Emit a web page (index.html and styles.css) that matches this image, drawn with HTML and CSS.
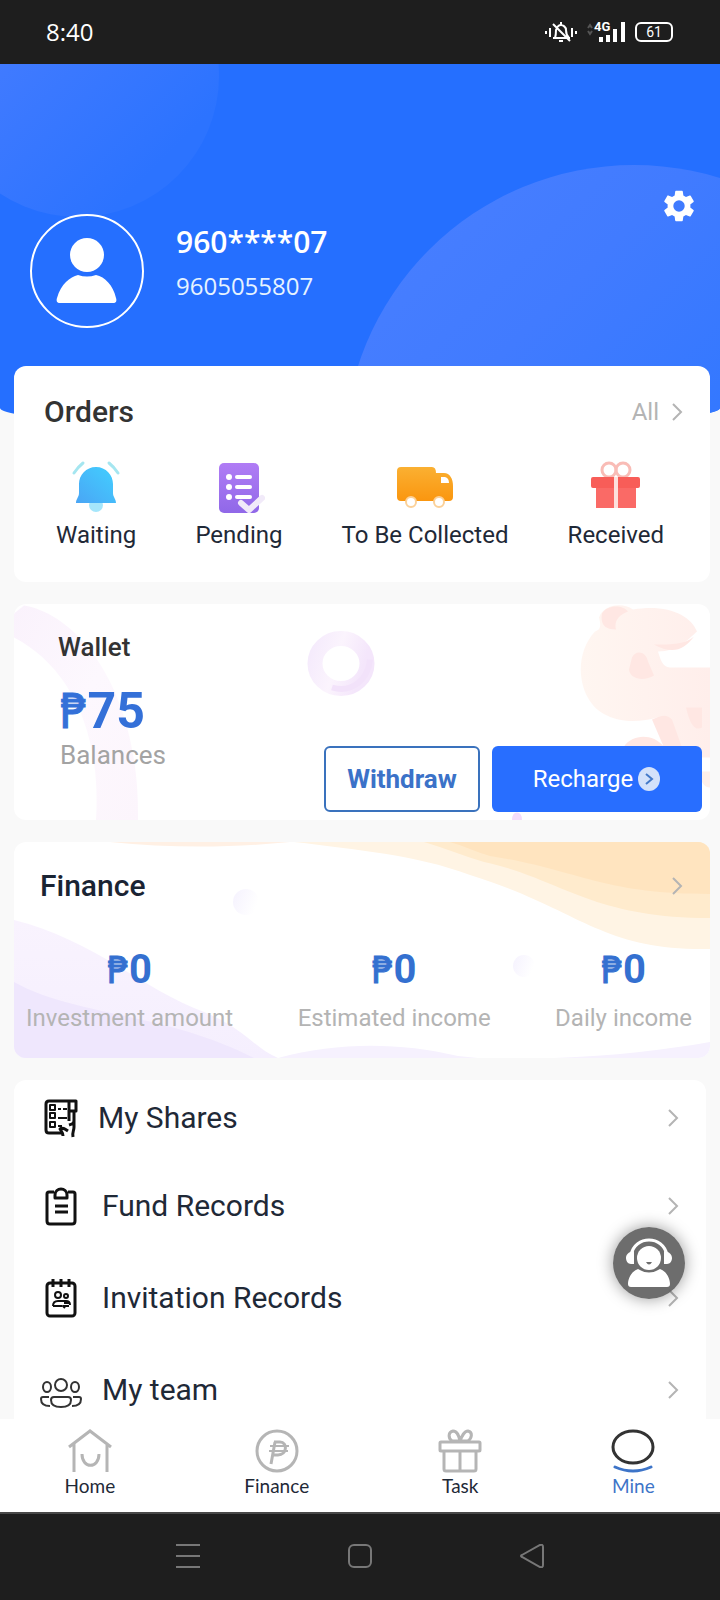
FILE: index.html
```html
<!DOCTYPE html>
<html lang="en">
<head>
<meta charset="utf-8">
<meta name="viewport" content="width=device-width, initial-scale=1">
<title>Mine</title>
<link rel="stylesheet" href="styles.css">
</head>
<body>
<div class="app">
  <div class="status">
    <span class="clock">8:40</span>
    <div class="status-icons">
      <svg width="32" height="24" viewBox="0 0 32 24" fill="none" stroke="#fff" stroke-width="2">
        <path d="M1 11v3M5 8v9M27 8v9M31 11v3"/>
        <path d="M8 18h17M10 18c1-3 1-5 1-8 1-3 3-5 5-5s5 2 5 5c0 3 1 6 3 8M16 2v3M14 21h4M8 4l17 17"/>
      </svg>
      <span class="net">
        <svg width="38" height="24" viewBox="0 0 38 24">
          <path d="M1 8l2-3 2 3M1 11l2 3 2-3" fill="none" stroke="#555" stroke-width="2"/>
          <path d="M12 17h4v5h-4zM19 15h4v7h-4zM26 9h4v13h-4zM34 2h4v20h-4z" fill="#fff"/>
        </svg>
        <span class="net-label">4G</span>
      </span>
      <span class="battery">61</span>
    </div>
  </div>

  <header class="hero">
    <svg class="hero-art" viewBox="0 0 720 364" preserveAspectRatio="xMidYMin slice">
      <defs>
        <linearGradient id="ga" x1="0" y1="0" x2="1" y2="1"><stop offset="0.3" stop-color="#427bff"/><stop offset="0.8" stop-color="#2c73ff"/></linearGradient>
        <linearGradient id="gb" x1="0.1" y1="0.1" x2="0.6" y2="0.6"><stop offset="0" stop-color="#477eff"/><stop offset="0.4" stop-color="#417bff"/><stop offset="1" stop-color="#3077ff"/></linearGradient>
      </defs>
      <circle cx="78" cy="12" r="141" fill="url(#ga)"/>
      <circle cx="634" cy="391" r="290" fill="url(#gb)"/>
    </svg>
    <div class="avatar">
      <svg width="62" height="66" viewBox="0 0 62 66" fill="#fff">
        <circle cx="31" cy="17" r="17"/>
        <path d="M4 65c-3 0-4-2-3-5C5 46 14 39 22 37c6 2 12 2 18 0 9 2 17 10 20 23 1 3 0 5-3 5z"/>
      </svg>
    </div>
    <div class="who">
      <h1 class="name">960****07</h1>
      <p class="phone">9605055807</p>
    </div>
    <button class="gear" aria-label="Settings">
      <svg width="38" height="38" viewBox="0 0 24 24" fill="#fff"><path d="M19.14 12.94c.04-.3.06-.61.06-.94s-.02-.64-.07-.94l2.03-1.58a.49.49 0 0 0 .12-.61l-1.92-3.32a.49.49 0 0 0-.59-.22l-2.39.96a7 7 0 0 0-1.62-.94l-.36-2.54a.48.48 0 0 0-.48-.41h-3.84a.48.48 0 0 0-.47.41l-.36 2.54c-.59.24-1.13.57-1.62.94l-2.39-.96a.48.48 0 0 0-.59.22L2.74 8.87a.48.48 0 0 0 .12.61l2.03 1.58c-.05.3-.09.63-.09.94s.02.64.07.94l-2.03 1.58a.49.49 0 0 0-.12.61l1.92 3.32c.12.22.37.29.59.22l2.39-.96c.5.38 1.03.7 1.62.94l.36 2.54c.05.24.24.41.48.41h3.84c.24 0 .44-.17.47-.41l.36-2.54c.59-.24 1.13-.56 1.62-.94l2.39.96c.22.08.47 0 .59-.22l1.92-3.32a.48.48 0 0 0-.12-.61zM12 15.6a3.6 3.6 0 1 1 0-7.2 3.6 3.6 0 0 1 0 7.2z"/></svg>
    </button>
  </header>

  <main class="content">
    <section class="card orders">
      <div class="card-head">
        <h2 class="title ink">Orders</h2>
        <a class="all" href="#">All <svg class="chev" width="12" height="20" viewBox="0 0 12 20"><path d="M2 2l8 8-8 8"/></svg></a>
      </div>
      <div class="order-list">
        <a class="order" href="#">
          <svg width="52" height="56" viewBox="0 0 52 56">
            <defs><linearGradient id="bell" x1="1" y1="0" x2="0" y2="1"><stop offset="0" stop-color="#42d0ff"/><stop offset="1" stop-color="#4aa5f5"/></linearGradient></defs>
            <circle cx="26" cy="47" r="7" fill="#a5e6fb"/>
            <path d="M26 9c10 0 17 8 17 17v9c0 4 3 6 3 10H6c0-4 3-6 3-10v-9C9 17 16 9 26 9z" fill="url(#bell)"/>
            <path d="M4 15q4-6 9-10M48 15Q44 9 39 5" fill="none" stroke="#a5e6f0" stroke-width="3" stroke-linecap="round"/>
          </svg>
          Waiting
        </a>
        <a class="order" href="#">
          <svg width="52" height="56" viewBox="0 0 52 56">
            <defs><linearGradient id="doc" x1="0" y1="0" x2="0" y2="1"><stop offset="0" stop-color="#b07cf5"/><stop offset="1" stop-color="#9068e8"/></linearGradient></defs>
            <rect x="6" y="5" width="40" height="50" rx="5" fill="url(#doc)"/>
            <g fill="#fff"><circle cx="16" cy="19" r="3"/><circle cx="16" cy="29" r="3"/><circle cx="16" cy="39" r="3"/><rect x="22" y="17" width="17" height="4" rx="2"/><rect x="22" y="27" width="17" height="4" rx="2"/><rect x="22" y="37" width="17" height="4" rx="2"/></g>
            <path d="M28 45l8 7 13-12" fill="none" stroke="#f1eaf9" stroke-width="6" stroke-linecap="round" stroke-linejoin="round"/>
          </svg>
          Pending
        </a>
        <a class="order" href="#">
          <svg width="58" height="56" viewBox="0 0 58 56">
            <defs><linearGradient id="van" x1="0" y1="0" x2="0" y2="1"><stop offset="0" stop-color="#fab032"/><stop offset="1" stop-color="#fa960f"/></linearGradient></defs>
            <path d="M5 9h31q4 0 4 6h8c6 0 9 6 9 13v11q0 4-4 4H5q-4 0-4-4V13q0-4 4-4z" fill="url(#van)"/>
            <path d="M45 19h4q4 1 4 6h-8z" fill="#fff"/>
            <g fill="#fff" stroke="#fbd199" stroke-width="2"><circle cx="15" cy="44" r="5"/><circle cx="43" cy="44" r="5"/></g>
          </svg>
          To Be Collected
        </a>
        <a class="order" href="#">
          <svg width="52" height="56" viewBox="0 0 52 56">
            <g fill="none" stroke="#f9bcb6" stroke-width="3"><circle cx="19" cy="12" r="7"/><circle cx="33" cy="12" r="7"/></g>
            <path d="M6 30h18v20H6zM28 30h18v20H28z" fill="#fa6a66"/>
            <path d="M3 19h21v11H3q-2 0-2-2v-7q0-2 2-2zM28 19h20q2 0 2 2v7q0 2-2 2H28z" fill="#f85d58"/>
            <path d="M24 19h4v31h-4z" fill="#fde0dc"/>
          </svg>
          Received
        </a>
      </div>
    </section>

    <section class="card wallet">
      <svg class="card-art" viewBox="0 0 696 217" preserveAspectRatio="xMidYMid slice">
        <defs>
          <linearGradient id="arc" x1="0" y1="0" x2="1" y2="1"><stop offset="0" stop-color="#faf2fc"/><stop offset="0.5" stop-color="#fdf8fe"/><stop offset="1" stop-color="#fcf5fc"/></linearGradient>
          <linearGradient id="ring" x1="0" y1="0" x2="1" y2="0.3"><stop offset="0" stop-color="#f5ebfc"/><stop offset="0.5" stop-color="#fbf4fd"/><stop offset="1" stop-color="#f4e6fb"/></linearGradient>
          <linearGradient id="pig" x1="0" y1="0" x2="1" y2="0"><stop offset="0" stop-color="#fff6f1"/><stop offset="1" stop-color="#ffeeeb"/></linearGradient>
        </defs>
        <path d="M10 2C60 10 126 80 124 217H82C88 120 50 60 0 34V10z" fill="url(#arc)"/>
        <ellipse cx="327" cy="60" rx="26" ry="25" fill="none" stroke="url(#ring)" stroke-width="15"/>
        <path d="M318 84c20 6 36-8 38-28" fill="none" stroke="#f2e2fa" stroke-width="6"/>
        <path d="M581 28c-24 26-16 72 12 84 16 8 36 6 50 2l14 40h39V64h-40c-8 0-10-10-12-16 20 0 30-12 39-20-6-16-30-28-64-22-12-8-30-4-34 8 2 8 2 12-4 14z" fill="url(#pig)"/>
        <g fill="#ffe7e3"><path d="M588 10c6-10 22-8 26-2-10 4-14 10-12 18-10 0-16-4-14-16z"/><path d="M618 54c4-8 14-6 16 4l6 14c-10 6-24 4-25-6z"/><path d="M638 116c10-4 14-6 20 0l10 28h-18zM672 104h16v20c-8 4-12-4-16-20zM610 143c8-12 28-14 40 0zM640 41c20 0 30 0 40-8-10 14-22 18-40 8z"/></g>
        <path d="M686 168h10v16c-6 0-10-6-10-16z" fill="#fff0ea"/>
        <path d="M498 217q0-8 5-8t5 8z" fill="#f5dcfb"/>
      </svg>
      <div class="balance">
        <h2 class="subtitle">Wallet</h2>
        <p class="amount"><span class="peso">₱</span>75</p>
        <p class="caption">Balances</p>
      </div>
      <div class="actions">
        <button class="btn outline">Withdraw</button>
        <button class="btn solid">Recharge<svg width="24" height="26" viewBox="0 0 24 26"><ellipse cx="12" cy="13" rx="11" ry="12" fill="#d3e1fa"/><path d="M9 8l6 5-6 5" fill="none" stroke="#4479c8" stroke-width="2"/></svg></button>
      </div>
    </section>

    <section class="card finance">
      <svg class="card-art" viewBox="0 0 696 216" preserveAspectRatio="none">
        <defs>
          <linearGradient id="dot" x1="0" y1="0" x2="1" y2="0.4"><stop offset="0" stop-color="#f5f2fe"/><stop offset="1" stop-color="#fff"/></linearGradient>
          <linearGradient id="low" x1="0" y1="0" x2="0" y2="1"><stop offset="0" stop-color="#f9f3fe"/><stop offset="1" stop-color="#f5effe"/></linearGradient>
        </defs>
        <path d="M96 0h180c-60 6-120 6-180 0z" fill="#fff0e4"/>
        <path d="M280 0h416v107c-110 2-130-40-240-74C400 12 340 8 290 1z" fill="#fff4e4"/>
        <path d="M410 0h286v76c-120 0-150-40-226-56-20-6-40-14-60-20z" fill="#ffebcd"/>
        <path d="M436 0h260v52c-110 0-130-24-220-38-14-4-26-10-40-14z" fill="#ffe4bf"/>
        <path d="M0 78c80 20 130 70 190 92 40 16 50 36 74 46H0z" fill="url(#low)"/>
        <path d="M0 140c60 34 150 30 240 76H0z" fill="#efe7fd"/>
        <path d="M264 216c60-16 120-16 180-2l20 2zM540 216c60-2 110-8 156-16v16z" fill="#f6f1fe"/>
        <circle cx="232" cy="60" r="13" fill="url(#dot)"/>
        <circle cx="510" cy="124" r="11" fill="url(#dot)"/>
      </svg>
      <div class="card-head">
        <h2 class="title navy">Finance</h2>
        <a class="more" href="#" aria-label="Finance details"><svg class="chev" width="12" height="20" viewBox="0 0 12 20"><path d="M2 2l8 8-8 8"/></svg></a>
      </div>
      <dl class="stats">
        <div class="stat"><dt>Investment amount</dt><dd><span class="peso">₱</span>0</dd></div>
        <div class="stat"><dt>Estimated income</dt><dd><span class="peso">₱</span>0</dd></div>
        <div class="stat"><dt>Daily income</dt><dd><span class="peso">₱</span>0</dd></div>
      </dl>
    </section>

    <nav class="menu">
      <a class="row" href="#">
        <svg class="row-icon" width="42" height="40" viewBox="0 0 42 40" fill="none" stroke="#111" stroke-width="3" stroke-linejoin="round">
          <path d="M29 3H9Q6 3 6 6v26q0 3 3 3h13M29 3h7v10h-7zM29 3v20"/>
          <path d="M10 7h5v5h-5zM10 15h5v5h-5zM10 24h5v5h-5z" stroke-width="2"/>
          <path d="M18 11h3M23 11h4M18 20h9M18 28h4" stroke-width="2"/>
          <path d="M23 38c0-3-1-4-3-7 2-2 5 0 8 2M29 27c3-1 5-1 5-5v-8M34 19v10c0 4-2 5-1 10"/>
        </svg>
        <span class="label">My Shares</span>
        <svg class="chev" width="12" height="20" viewBox="0 0 12 20"><path d="M2 2l8 8-8 8"/></svg>
      </a>
      <a class="row" href="#">
        <svg class="row-icon" width="42" height="40" viewBox="0 0 42 40" fill="none" stroke="#111" stroke-width="3" stroke-linejoin="round">
          <path d="M14 6H9Q7 6 7 8v27q0 3 3 3h22q3 0 3-3V8q0-2-2-2h-5"/>
          <path d="M15 12V9c0-8 12-8 12 0v3z"/>
          <path d="M15 20h13M15 26h13"/>
        </svg>
        <span class="label">Fund Records</span>
        <svg class="chev" width="12" height="20" viewBox="0 0 12 20"><path d="M2 2l8 8-8 8"/></svg>
      </a>
      <a class="row" href="#">
        <svg class="row-icon" width="42" height="40" viewBox="0 0 42 40" fill="none" stroke="#111" stroke-width="3" stroke-linejoin="round">
          <rect x="7" y="5" width="28" height="33" rx="3"/>
          <path d="M13 1v8M21 1v8M29 1v8"/>
          <g stroke-width="2"><circle cx="18" cy="17" r="3"/><circle cx="26" cy="18" r="2"/><path d="M13 28c0-4 2-5 5-5h8c3 0 4 2 4 4M13 28h9M24 25h5l-2-2M29 28h-6l2 2"/></g>
        </svg>
        <span class="label">Invitation Records</span>
        <svg class="chev" width="12" height="20" viewBox="0 0 12 20"><path d="M2 2l8 8-8 8"/></svg>
      </a>
      <a class="row" href="#">
        <svg class="row-icon" width="42" height="40" viewBox="0 0 42 40" fill="none" stroke="#333" stroke-width="2" stroke-linejoin="round">
          <circle cx="21" cy="15" r="6"/><ellipse cx="7" cy="17" rx="4" ry="5"/><ellipse cx="35" cy="17" rx="4" ry="5"/>
          <path d="M14 27h14q3 0 3 3c0 5-4 7-10 7s-10-2-10-7q0-3 3-3zM9 27H3q-2 0-2 2c0 5 3 7 9 7M33 27h6q2 0 2 2c0 5-3 7-9 7"/>
        </svg>
        <span class="label">My team</span>
        <svg class="chev" width="12" height="20" viewBox="0 0 12 20"><path d="M2 2l8 8-8 8"/></svg>
      </a>
    </nav>

    <button class="support" aria-label="Customer service">
      <svg width="48" height="50" viewBox="0 0 48 50">
        <path d="M6 17C10-3 38-3 42 17" fill="none" stroke="#fff" stroke-width="3"/>
        <path d="M9 13v13H6c-3 0-5-3-5-6s2-6 8-7zM39 13v13h3c3 0 5-3 5-6s-2-6-8-7z" fill="#fff"/>
        <circle cx="24" cy="20" r="12" fill="#fff"/>
        <path d="M21 24h6q-3 5-6 0z" fill="#6e6e6e"/>
        <path d="M13 31q11 7 22 0c6 2 10 9 10 15q0 3-3 3H6q-3 0-3-3c0-6 4-13 10-15z" fill="#fff"/>
      </svg>
    </button>
  </main>

  <nav class="tabs">
    <a class="tab" href="#">
      <svg width="44" height="44" viewBox="0 0 44 44" fill="none" stroke="#b5b5b5" stroke-width="3"><path d="M1 18L22 2l21 16M6 15v28M39 15v28"/><path d="M14 25c0 15 17 15 17 0"/></svg>
      Home
    </a>
    <a class="tab" href="#">
      <svg width="44" height="44" viewBox="0 0 44 44" fill="none" stroke="#b5b5b5" stroke-width="3"><circle cx="22" cy="22" r="20"/><path d="M20 13l-4 22M19 13h6c8 0 7 13-2 13h-5"/><path d="M15 17h19M14 22h19" stroke-width="2"/></svg>
      Finance
    </a>
    <a class="tab" href="#">
      <svg width="44" height="44" viewBox="0 0 44 44" fill="none" stroke="#b5b5b5" stroke-width="3" stroke-linejoin="round"><rect x="2" y="13" width="40" height="9" rx="1"/><path d="M6 22v18q0 2 2 2h28q2 0 2-2V22M22 22v20M21 12L14 12C10 9 10 3 15 2c5 0 6 6 7 10zM23 12h7c4-3 5-9 0-10-4 0-6 5-8 10z"/></svg>
      Task
    </a>
    <a class="tab active" href="#">
      <svg width="44" height="44" viewBox="0 0 44 44" fill="none" stroke-width="3"><ellipse cx="22" cy="18" rx="20" ry="16" stroke="#333"/><path d="M4 38q18 8 36 0" stroke="#3d74c8" stroke-linecap="round"/></svg>
      Mine
    </a>
  </nav>

  <div class="sysnav">
    <button class="sys" aria-label="Recent apps"><svg width="24" height="24" viewBox="0 0 24 24"><path d="M0 1h24M0 12h24M0 23h24"/></svg></button>
    <button class="sys" aria-label="Home screen"><svg width="24" height="24" viewBox="0 0 24 24"><rect x="1" y="1" width="22" height="22" rx="5"/></svg></button>
    <button class="sys" aria-label="Back"><svg width="24" height="24" viewBox="0 0 24 24"><path d="M2 11L20 1q3-1 3 2v18q0 3-3 2L2 13q-2-1 0-2z"/></svg></button>
  </div>
</div>
</body>
</html>
```
FILE: styles.css
```css
* { box-sizing: border-box; }
body { margin: 0; background: #f9f9f9; font-family: Roboto, "Liberation Sans", sans-serif; color: #1f2937; }
h1, h2, p, dl, dd, dt { margin: 0; font-weight: inherit; }
a { color: inherit; text-decoration: none; }
button { font: inherit; border: 0; padding: 0; background: none; cursor: pointer; }
svg { display: block; flex: none; }

.app { display: flex; flex-direction: column; min-height: 100vh; }

.status { display: flex; justify-content: space-between; align-items: center; height: 64px; padding: 0 47px 0 46px; background: #1e1e1e; color: #fff; }
.clock { font: 24px/32px "Open Sans", sans-serif; }
.status-icons { display: flex; align-items: center; gap: 10px; }
.net { position: relative; }
.net-label { position: absolute; left: 7px; top: 0; font: 700 13px/14px Roboto, sans-serif; background: #1e1e1e; }
.battery { width: 38px; height: 20px; border: 2px solid #fff; border-radius: 6px; font-size: 14px; line-height: 16px; text-align: center; }

.hero { position: relative; display: flex; align-items: flex-start; height: 364px; padding: 150px 22px 0 30px; background: #256fff; border-radius: 0 0 50% 50% / 0 0 20px 20px; overflow: hidden; color: #fff; }
.hero-art { position: absolute; inset: 0; width: 100%; height: 100%; }
.avatar { position: relative; display: flex; align-items: center; justify-content: center; width: 114px; height: 114px; border: 2px solid #fff; border-radius: 50%; }
.who { position: relative; flex: 1; padding: 8px 0 0 32px; font-family: "Open Sans", sans-serif; }
.name { font-size: 30px; line-height: 40px; font-weight: 600; }
.phone { font-size: 24px; line-height: 32px; margin-top: 8px; color: #e6f3ff; }
.gear { position: relative; margin-top: -27px; }

.content { position: relative; flex: 1; display: flex; flex-direction: column; gap: 22px; margin-top: -62px; padding: 0 10px 0 14px; }
.card { position: relative; background: #fff; border-radius: 12px; overflow: hidden; }
.card-art { position: absolute; inset: 0; width: 100%; height: 100%; }
.card-head { position: relative; display: flex; justify-content: space-between; align-items: center; }
.title { font-size: 30px; line-height: 36px; font-weight: 500; }
.ink { color: #333; }
.navy { color: #1a2433; }
.chev { fill: none; stroke: #b4b4b4; stroke-width: 2; }

.orders { padding: 28px 0 31px; }
.orders .card-head { padding: 0 27px 0 30px; }
.all { display: flex; align-items: center; gap: 12px; font-size: 24px; line-height: 36px; color: #b4b4b4; }
.order-list { display: flex; justify-content: space-between; padding: 28px 46px 0 42px; }
.order { display: flex; flex-direction: column; align-items: center; gap: 5px; font-size: 24px; line-height: 32px; }

.peso { font-family: "DejaVu Sans Condensed", "Liberation Sans", sans-serif; font-weight: 400; -webkit-text-stroke: 1px currentColor; }
.wallet { display: flex; justify-content: space-between; padding: 27px 8px 8px 44px; }
.balance { position: relative; height: 181px; }
.subtitle { font-size: 26px; line-height: 32px; font-weight: 500; color: #333; }
.amount { margin-top: 20px; padding-left: 2px; font-size: 50px; line-height: 56px; font-weight: 700; color: #3470d8; }
.amount .peso { font-size: 48px; line-height: 48px; }
.caption { padding-left: 2px; font-size: 26px; line-height: 32px; color: #a3a3a3; }
.actions { position: relative; display: flex; align-self: flex-end; gap: 12px; }
.btn { display: flex; align-items: center; justify-content: center; gap: 4px; height: 66px; border-radius: 6px; font-size: 24px; }
.outline { width: 156px; border: 2px solid #3a72bd; background: #fff; color: #3b72c8; font-size: 26px; font-weight: 700; }
.solid { width: 210px; background: #286eff; color: #fff; }

.finance { padding: 26px 0 24px; }
.finance .card-head { padding: 0 27px 0 26px; }
.stats { position: relative; display: flex; justify-content: space-between; padding: 42px 18px 0 12px; }
.stat { display: flex; flex-direction: column-reverse; align-items: center; gap: 8px; }
.stat dt { font-size: 24px; line-height: 32px; color: #b4b4b4; }
.stat dd { font-size: 40px; line-height: 48px; font-weight: 700; color: #3470d0; }
.stat .peso { font-size: 38px; line-height: 38px; }

.menu { flex: 1; margin-right: 4px; background: #fff; border-radius: 12px 12px 0 0; }
.row { display: flex; align-items: center; gap: 20px; padding: 28px 27px 28px 26px; font-size: 30px; line-height: 36px; }
.row:first-child { padding-top: 20px; padding-bottom: 24px; gap: 16px; }
.row:last-child { padding-bottom: 8px; }
.row-icon { margin: -2px 0; }
.label { flex: 1; }

.support { position: absolute; right: 35px; bottom: 120px; display: flex; align-items: center; justify-content: center; width: 72px; height: 72px; border-radius: 50%; background: rgba(100, 100, 100, 0.94); box-shadow: 0 0 16px rgba(0, 0, 0, 0.4); }

.tabs { position: relative; display: flex; justify-content: space-around; padding: 10px 0 14px; background: #fff; }
.tab { display: flex; flex-direction: column; align-items: center; gap: 1px; font: 19px/24px Lato, sans-serif; }
.active { color: #3d74c8; }

.sysnav { display: flex; align-items: center; justify-content: center; gap: 148px; height: 88px; padding-bottom: 2px; border-top: 2px solid #484848; background: #1e1e1e; }
.sys { fill: none; stroke: #777; stroke-width: 2; }
```
